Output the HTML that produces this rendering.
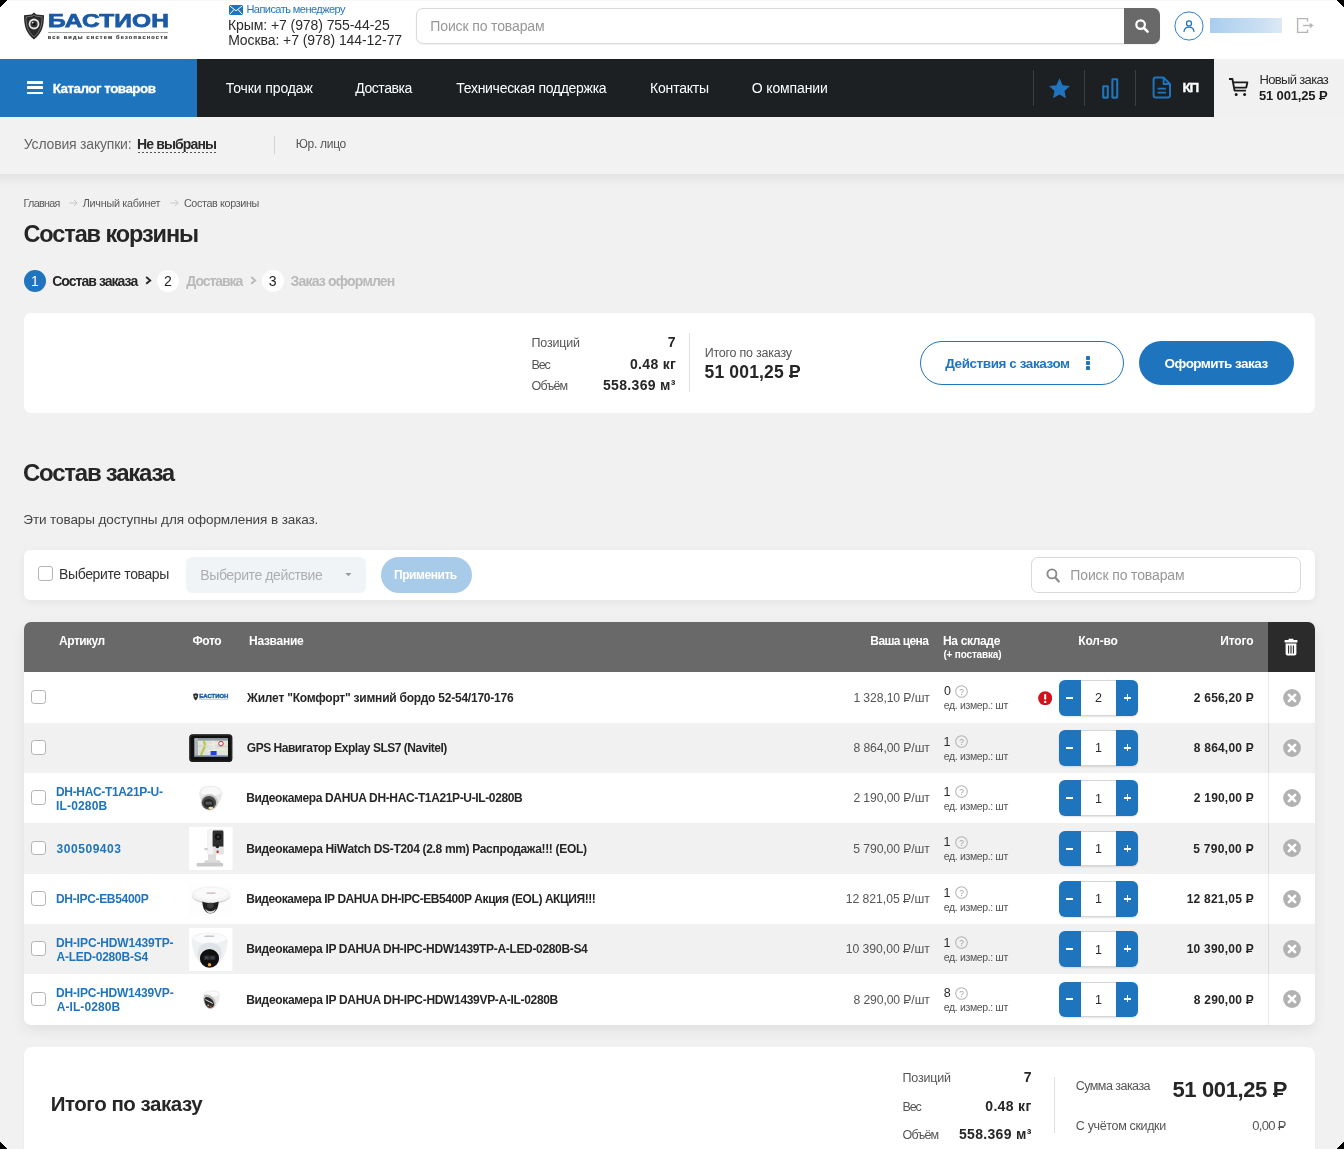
<!DOCTYPE html>
<html lang="ru"><head><meta charset="utf-8"><title>Состав корзины</title>
<style>
html,body{margin:0;padding:0;}
body{background:#000;width:1344px;height:1149px;overflow:hidden;font-family:"Liberation Sans",sans-serif;}
#win{position:absolute;left:0;top:0;width:1344px;height:1149px;background:#f1f1f1;overflow:hidden;will-change:transform;}
.b{position:absolute;display:block;}
.t{position:absolute;display:block;white-space:nowrap;line-height:1;}
.rub{position:relative;display:inline-block;}
.rub::after{content:"";position:absolute;left:0.02em;width:0.47em;top:0.655em;height:0.08em;background:currentColor;}
</style></head>
<body><div id="win">
<div class="b" style="left:0px;top:0px;width:1344px;height:59px;background:#fff;"></div>
<svg class="b" style="left:23.3px;top:11.6px" width="22" height="28" viewBox="0 0 22 28">
<path d="M11 0.6 L13.5 2.4 L21 3.2 C21 13 19.5 21 11 27.4 C2.5 21 1 13 1 3.2 L8.5 2.4 Z" fill="#2a2a2a"/>
<path d="M11 3 L13 4.2 L19 4.9 C19 12.5 17.6 19.6 11 24.8 C4.4 19.6 3 12.5 3 4.9 L9 4.2 Z" fill="none" stroke="#9a9a9a" stroke-width="0.6"/>
<circle cx="11" cy="12" r="5.4" fill="#e6e6e6"/><circle cx="11" cy="12" r="3.6" fill="#333"/><circle cx="11" cy="12" r="1.6" fill="#111"/><circle cx="9.7" cy="10.6" r="0.9" fill="#ddd"/>
</svg>
<span class="t" style="left:47.6px;top:11.4px;font-size:19px;font-weight:700;color:#1b5aa6;-webkit-text-stroke:0.75px #1b5aa6;transform-origin:0 0;transform:scaleX(1.288);letter-spacing:0.1px">БАСТИОН</span>
<div class="b" style="left:47.5px;top:31.6px;width:120.5px;height:1px;background:#a8a8a8;"></div>
<span id="t1" class="t " style="left:47.77px;top:35.06px;font-size:5.6px;font-weight:700;color:#3a3a3a;letter-spacing:1.207px;-webkit-text-stroke:0.2px #3a3a3a;">все виды систем безопасности</span>
<svg class="b" style="left:229px;top:5px" width="14" height="10" viewBox="0 0 14 10"><rect width="14" height="10" rx="1" fill="#1f74be"/><path d="M0.6 0.8 L7 5.8 L13.4 0.8 M0.6 9.4 L5 4.6 M13.4 9.4 L9 4.6" stroke="#fff" stroke-width="1" fill="none"/></svg>
<span id="t2" class="t " style="left:246.43px;top:4.29px;font-size:11px;font-weight:400;color:#1f74be;letter-spacing:-0.549px;">Написать менеджеру</span>
<span id="t3" class="t " style="left:228.00px;top:17.95px;font-size:14px;font-weight:400;color:#2b2b2b;letter-spacing:-0.078px;">Крым: +7 (978) 755-44-25</span>
<span id="t4" class="t " style="left:228.13px;top:33.05px;font-size:14px;font-weight:400;color:#2b2b2b;letter-spacing:-0.073px;">Москва: +7 (978) 144-12-77</span>
<div class="b" style="left:416px;top:8px;width:744px;height:36px;background:#fff;border:1px solid #d9d9d9;border-radius:7px;box-sizing:border-box;box-shadow:0 1px 2px rgba(0,0,0,0.06);"></div>
<span id="t5" class="t " style="left:430.32px;top:18.95px;font-size:14px;font-weight:400;color:#979797;letter-spacing:-0.131px;">Поиск по товарам</span>
<div class="b" style="left:1124px;top:8px;width:36px;height:36px;background:#696969;border-radius:0 7px 7px 0;"></div>
<svg class="b" style="left:1134px;top:18px" width="16" height="16" viewBox="0 0 16 16"><circle cx="6.6" cy="6.6" r="4.3" fill="none" stroke="#fff" stroke-width="2.2"/><path d="M9.8 9.8 L13.6 13.6" stroke="#fff" stroke-width="2.6" stroke-linecap="round"/></svg>
<svg class="b" style="left:1173.5px;top:10.5px" width="30" height="30" viewBox="0 0 30 30"><circle cx="15" cy="15" r="14.1" fill="#fff" stroke="#2e7fc6" stroke-width="1"/><circle cx="15" cy="12.4" r="2.5" fill="none" stroke="#1f74be" stroke-width="1.3"/><path d="M10 20.4 C10.4 17.2 12.4 16.2 15 16.2 C17.6 16.2 19.6 17.2 20 20.4" fill="none" stroke="#1f74be" stroke-width="1.3" stroke-linecap="round"/></svg>
<div class="b" style="left:1210px;top:18px;width:72px;height:15px;background:linear-gradient(90deg,#a9cdee 0%,#bcd8f1 40%,#c9dff3 70%,#dde9f5 100%);filter:blur(0.6px);"></div>
<svg class="b" style="left:1296.4px;top:17.2px" width="19" height="17" viewBox="0 0 19 17"><path d="M11.5 4.5 V1.6 H1.6 V15.4 H11.5 V12.5" fill="none" stroke="#b5b5b5" stroke-width="1.4"/><path d="M7 8.5 H15" stroke="#b5b5b5" stroke-width="1.4"/><path d="M13.8 5.8 L17.6 8.5 L13.8 11.2 Z" fill="#b5b5b5"/></svg>
<div class="b" style="left:0px;top:59px;width:197px;height:57.5px;background:#1f74be;"></div>
<div class="b" style="left:197px;top:59px;width:1017px;height:57.5px;background:#1c2023;"></div>
<div class="b" style="left:1214px;top:59px;width:130px;height:57.5px;background:#f1f1f1;"></div>
<div class="b" style="left:26.6px;top:80.85px;width:16.4px;height:2.7px;background:#fff;border-radius:0.6px;"></div>
<div class="b" style="left:26.6px;top:86.25px;width:16.4px;height:2.7px;background:#fff;border-radius:0.6px;"></div>
<div class="b" style="left:26.6px;top:91.65px;width:16.4px;height:2.7px;background:#fff;border-radius:0.6px;"></div>
<span id="t6" class="t " style="left:52.63px;top:82.06px;font-size:13.4px;font-weight:700;color:#fff;letter-spacing:-0.493px;-webkit-text-stroke:0.3px #fff;">Каталог товаров</span>
<span id="t7" class="t " style="left:225.77px;top:80.95px;font-size:14px;font-weight:400;color:#fff;letter-spacing:-0.098px;">Точки продаж</span>
<span id="t8" class="t " style="left:355.20px;top:80.95px;font-size:14px;font-weight:400;color:#fff;letter-spacing:-0.433px;">Доставка</span>
<span id="t9" class="t " style="left:456.27px;top:80.95px;font-size:14px;font-weight:400;color:#fff;letter-spacing:-0.288px;">Техническая поддержка</span>
<span id="t10" class="t " style="left:650.11px;top:80.95px;font-size:14px;font-weight:400;color:#fff;letter-spacing:-0.216px;">Контакты</span>
<span id="t11" class="t " style="left:751.84px;top:80.95px;font-size:14px;font-weight:400;color:#fff;letter-spacing:-0.147px;">О компании</span>
<div class="b" style="left:1033px;top:70px;width:1px;height:36px;background:#3b3f43;"></div>
<div class="b" style="left:1084px;top:70px;width:1px;height:36px;background:#3b3f43;"></div>
<div class="b" style="left:1135px;top:70px;width:1px;height:36px;background:#3b3f43;"></div>
<svg class="b" style="left:1047.6px;top:76.6px" width="23" height="23" viewBox="0 0 22 22"><path d="M11 1.2 L14 7.8 L21 8.6 L15.8 13.4 L17.2 20.4 L11 16.8 L4.8 20.4 L6.2 13.4 L1 8.6 L8 7.8 Z" fill="#1f74be"/></svg>
<svg class="b" style="left:1101px;top:76.6px" width="19" height="23" viewBox="0 0 19 23"><rect x="2.2" y="9.2" width="4.6" height="11.4" rx="0.4" fill="none" stroke="#1f74be" stroke-width="2.1"/><rect x="11.4" y="2.2" width="4.8" height="18.4" rx="0.4" fill="none" stroke="#1f74be" stroke-width="2.1"/></svg>
<svg class="b" style="left:1151.6px;top:76.4px" width="20" height="23" viewBox="0 0 20 23"><path d="M3.4 1.6 H11.6 L18 8 V19.6 Q18 21.4 16.2 21.4 H3.4 Q1.6 21.4 1.6 19.6 V3.4 Q1.6 1.6 3.4 1.6 Z" fill="none" stroke="#1f74be" stroke-width="2" stroke-linejoin="round"/><path d="M11.6 1.6 V8 H18" fill="none" stroke="#1f74be" stroke-width="1.8" stroke-linejoin="round"/><path d="M5.6 12.6 H14 M5.6 16.6 H14" stroke="#1f74be" stroke-width="1.8"/></svg>
<span id="t12" class="t " style="left:1182.54px;top:80.67px;font-size:13.5px;font-weight:700;color:#fff;letter-spacing:-1.337px;-webkit-text-stroke:0.35px #fff;">КП</span>
<svg class="b" style="left:1228px;top:77px" width="22" height="21" viewBox="0 0 22 21"><path d="M1 2 H4.4 L6.6 13.6 H18 M5.2 5.4 H19.4 L18.2 10.6 H6.2" fill="none" stroke="#1c1c1c" stroke-width="1.9" stroke-linejoin="round"/><circle cx="8.2" cy="17.6" r="1.5" fill="#1c1c1c"/><circle cx="16.6" cy="17.6" r="1.5" fill="#1c1c1c"/></svg>
<span id="t13" class="t " style="left:1259.60px;top:72.80px;font-size:13px;font-weight:400;color:#2b2b2b;letter-spacing:-0.673px;">Новый заказ</span>
<span id="t14" class="t " style="left:1259.00px;top:89.20px;font-size:13px;font-weight:700;color:#1c1c1c;letter-spacing:-0.158px;">51 001,25 <span class="rub">Р</span></span>
<div class="b" style="left:0px;top:116.5px;width:1344px;height:57.5px;background:#f2f2f2;"></div>
<div class="b" style="left:0px;top:174px;width:1344px;height:12px;background:linear-gradient(180deg,rgba(0,0,0,0.055),rgba(0,0,0,0));"></div>
<span id="t15" class="t " style="left:23.87px;top:137.35px;font-size:14px;font-weight:400;color:#666;letter-spacing:-0.197px;">Условия закупки:</span>
<span id="t16" class="t " style="left:137.00px;top:137.35px;font-size:14px;font-weight:700;color:#2b2b2b;letter-spacing:-0.867px;">Не выбраны</span>
<div class="b" style="left:138px;top:152.2px;width:78px;height:1px;background:repeating-linear-gradient(90deg,#555 0 2px,transparent 2px 4px);"></div>
<div class="b" style="left:274px;top:136px;width:1px;height:18px;background:#d4d4d4;"></div>
<span id="t17" class="t " style="left:295.80px;top:138.04px;font-size:12px;font-weight:400;color:#555;letter-spacing:-0.301px;">Юр. лицо</span>
<span id="t18" class="t " style="left:23.51px;top:197.56px;font-size:10.8px;font-weight:400;color:#5a5a5a;letter-spacing:-0.691px;">Главная</span>
<svg class="b" style="left:69px;top:198.6px" width="9" height="8" viewBox="0 0 9 8"><path d="M0.3 4 H8 M5 1 L8.2 4 L5 7" fill="none" stroke="#c4c4c4" stroke-width="0.9"/></svg>
<span id="t19" class="t " style="left:82.81px;top:197.56px;font-size:10.8px;font-weight:400;color:#5a5a5a;letter-spacing:-0.275px;">Личный кабинет</span>
<svg class="b" style="left:170.2px;top:198.6px" width="9" height="8" viewBox="0 0 9 8"><path d="M0.3 4 H8 M5 1 L8.2 4 L5 7" fill="none" stroke="#c4c4c4" stroke-width="0.9"/></svg>
<span id="t20" class="t " style="left:183.93px;top:197.56px;font-size:10.8px;font-weight:400;color:#5a5a5a;letter-spacing:-0.371px;">Состав корзины</span>
<span id="t21" class="t " style="left:23.44px;top:222.51px;font-size:23.5px;font-weight:700;color:#262626;letter-spacing:-1.098px;">Состав корзины</span>
<div class="b" style="left:24px;top:270px;width:22px;height:22px;background:#1f74be;border-radius:50%;"></div>
<span id="t22" class="t " style="left:35.00px;transform:translateX(-50%);top:273.75px;font-size:14px;font-weight:400;color:#fff;">1</span>
<span id="t23" class="t " style="left:52.20px;top:273.85px;font-size:14px;font-weight:700;color:#262626;letter-spacing:-0.958px;">Состав заказа</span>
<svg class="b" style="left:145px;top:276.4px" width="7" height="9" viewBox="0 0 7 9"><path d="M1.2 1 L5.2 4.4 L1.2 7.8" fill="none" stroke="#262626" stroke-width="1.9"/></svg>
<div class="b" style="left:157px;top:270px;width:22px;height:22px;background:#fff;border-radius:50%;"></div>
<span id="t24" class="t " style="left:168.00px;transform:translateX(-50%);top:273.75px;font-size:14px;font-weight:400;color:#222;">2</span>
<span id="t25" class="t " style="left:186.30px;top:273.85px;font-size:14px;font-weight:700;color:#b9b9b9;letter-spacing:-1.063px;">Доставка</span>
<svg class="b" style="left:250px;top:276.4px" width="7" height="9" viewBox="0 0 7 9"><path d="M1.2 1 L5.2 4.4 L1.2 7.8" fill="none" stroke="#b9b9b9" stroke-width="1.9"/></svg>
<div class="b" style="left:261.7px;top:270px;width:22px;height:22px;background:#fff;border-radius:50%;"></div>
<span id="t26" class="t " style="left:272.70px;transform:translateX(-50%);top:273.75px;font-size:14px;font-weight:400;color:#222;">3</span>
<span id="t27" class="t " style="left:290.60px;top:273.85px;font-size:14px;font-weight:700;color:#b9b9b9;letter-spacing:-0.810px;">Заказ оформлен</span>
<div class="b" style="left:23.8px;top:312.5px;width:1291.2px;height:100.6px;background:#fff;border-radius:7px;"></div>
<span id="t28" class="t " style="left:531.49px;top:337.42px;font-size:12.5px;font-weight:400;color:#555;letter-spacing:-0.174px;">Позиций</span>
<span id="t29" class="t " style="left:531.62px;top:358.62px;font-size:12.5px;font-weight:400;color:#555;letter-spacing:-1.218px;">Вес</span>
<span id="t30" class="t " style="left:531.62px;top:380.42px;font-size:12.5px;font-weight:400;color:#555;letter-spacing:-0.836px;">Объём</span>
<span id="t31" class="t " style="right:668.59px;top:334.95px;font-size:14px;font-weight:700;color:#262626;">7</span>
<span id="t32" class="t " style="right:667.80px;top:357.05px;font-size:14px;font-weight:700;color:#262626;letter-spacing:0.320px;">0.48 кг</span>
<span id="t33" class="t " style="right:668.20px;top:378.15px;font-size:14px;font-weight:700;color:#262626;letter-spacing:0.333px;">558.369 м³</span>
<div class="b" style="left:689px;top:333px;width:1px;height:59px;background:#e0e0e0;"></div>
<span id="t34" class="t " style="left:704.63px;top:347.22px;font-size:12.5px;font-weight:400;color:#555;letter-spacing:-0.224px;">Итого по заказу</span>
<span id="t35" class="t " style="left:704.51px;top:363.99px;font-size:17.5px;font-weight:700;color:#262626;letter-spacing:0.175px;">51 001,25 <span class="rub">Р</span></span>
<div class="b" style="left:920px;top:341px;width:204px;height:44px;background:#fff;border:1px solid #1f74be;border-radius:22px;box-sizing:border-box;"></div>
<span id="t36" class="t " style="left:945.20px;top:357.37px;font-size:13.5px;font-weight:700;color:#1f74be;letter-spacing:-0.426px;">Действия с заказом</span>
<div class="b" style="left:1085.8px;top:355.8px;width:4.2px;height:4px;background:#1f74be;border-radius:0.7px;"></div>
<div class="b" style="left:1085.8px;top:360.7px;width:4.2px;height:4px;background:#1f74be;border-radius:0.7px;"></div>
<div class="b" style="left:1085.8px;top:365.6px;width:4.2px;height:4px;background:#1f74be;border-radius:0.7px;"></div>
<div class="b" style="left:1139px;top:341px;width:155px;height:44px;background:#1f74be;border-radius:22px;"></div>
<span id="t37" class="t " style="left:1164.58px;top:357.37px;font-size:13.5px;font-weight:700;color:#fff;letter-spacing:-0.543px;">Оформить заказ</span>
<span id="t38" class="t " style="left:23.00px;top:460.68px;font-size:24px;font-weight:700;color:#262626;letter-spacing:-1.250px;">Состав заказа</span>
<span id="t39" class="t " style="left:23.31px;top:512.77px;font-size:13.5px;font-weight:400;color:#444;letter-spacing:-0.092px;">Эти товары доступны для оформления в заказ.</span>
<div class="b" style="left:23.9px;top:549.8px;width:1291.2px;height:50.3px;background:#fff;border-radius:6px;box-shadow:0 2px 9px rgba(0,0,0,0.06);"></div>
<div class="b" style="left:38.3px;top:566.2px;width:14.5px;height:14.5px;background:#fff;border:1px solid #b4b4b4;border-radius:3px;box-sizing:border-box;"></div>
<span id="t40" class="t " style="left:59.00px;top:567.05px;font-size:14px;font-weight:400;color:#333;letter-spacing:-0.371px;">Выберите товары</span>
<div class="b" style="left:186.2px;top:557px;width:179.6px;height:36px;background:#f1f4f7;border-radius:6px;"></div>
<span id="t41" class="t " style="left:200.30px;top:568.15px;font-size:14px;font-weight:400;color:#aeaeae;letter-spacing:-0.397px;">Выберите действие</span>
<svg class="b" style="left:344.6px;top:573.4px" width="7" height="4" viewBox="0 0 7 4"><path d="M0.3 0 H6.5 L3.4 3.3 Z" fill="#999"/></svg>
<div class="b" style="left:380.8px;top:557px;width:91.3px;height:36px;background:#a9cbea;border-radius:18px;"></div>
<span id="t42" class="t " style="left:394.00px;top:569.24px;font-size:12px;font-weight:700;color:#fff;letter-spacing:-0.441px;">Применить</span>
<div class="b" style="left:1031px;top:557px;width:270px;height:36px;background:#fff;border:1px solid #d9d9d9;border-radius:7px;box-sizing:border-box;"></div>
<svg class="b" style="left:1046.4px;top:567.6px" width="15" height="15" viewBox="0 0 15 15"><circle cx="5.9" cy="5.9" r="4.5" fill="none" stroke="#8a8a8a" stroke-width="1.9"/><path d="M9.3 9.5 L12.8 13.4" stroke="#8a8a8a" stroke-width="2.2" stroke-linecap="round"/></svg>
<span id="t43" class="t " style="left:1070.32px;top:567.95px;font-size:14px;font-weight:400;color:#979797;letter-spacing:-0.131px;">Поиск по товарам</span>
<div class="b" style="left:24px;top:622px;width:1291px;height:402.6px;background:#fff;border-radius:7px;box-shadow:0 5px 14px rgba(0,0,0,0.075);"></div>
<div class="b" style="left:24px;top:622px;width:1244px;height:50px;background:#696969;border-radius:7px 0 0 0;"></div>
<div class="b" style="left:1268px;top:622px;width:47px;height:50px;background:#2b2b2b;border-radius:0 7px 0 0;"></div>
<span id="t44" class="t " style="left:59.12px;top:635.04px;font-size:12px;font-weight:700;color:#fff;letter-spacing:-0.524px;">Артикул</span>
<span id="t45" class="t " style="left:192.49px;top:635.04px;font-size:12px;font-weight:700;color:#fff;letter-spacing:-0.423px;">Фото</span>
<span id="t46" class="t " style="left:249.00px;top:635.04px;font-size:12px;font-weight:700;color:#fff;letter-spacing:-0.286px;">Название</span>
<span id="t47" class="t " style="right:415.79px;top:635.04px;font-size:12px;font-weight:700;color:#fff;letter-spacing:-0.604px;">Ваша цена</span>
<span id="t48" class="t " style="left:943.00px;top:635.04px;font-size:12px;font-weight:700;color:#fff;letter-spacing:-0.346px;">На складе</span>
<span id="t49" class="t " style="left:943.42px;top:649.83px;font-size:10px;font-weight:700;color:#fff;letter-spacing:-0.176px;">(+ поставка)</span>
<span id="t50" class="t " style="left:1098.00px;transform:translateX(-50%);top:635.04px;font-size:12px;font-weight:700;color:#fff;letter-spacing:-0.198px;">Кол-во</span>
<span id="t51" class="t " style="right:90.69px;top:635.04px;font-size:12px;font-weight:700;color:#fff;letter-spacing:-0.162px;">Итого</span>
<svg class="b" style="left:1284px;top:638px" width="14" height="18" viewBox="0 0 14 18"><path d="M4.6 2 V0.8 H9.4 V2 H13.4 V4.4 H0.6 V2 Z" fill="#fff"/><path d="M1.6 5.6 H12.4 V15.6 C12.4 16.8 11.6 17.6 10.4 17.6 H3.6 C2.4 17.6 1.6 16.8 1.6 15.6 Z" fill="#fff"/><path d="M4.6 7.6 V15.4 M7 7.6 V15.4 M9.4 7.6 V15.4" stroke="#2b2b2b" stroke-width="1.1"/></svg>
<div class="b" style="left:31px;top:689.75px;width:14.5px;height:14.6px;background:#fff;border:1px solid #b4b4b4;border-radius:3.2px;box-sizing:border-box;"></div>
<svg class="b" style="left:193px;top:693.15px" width="36" height="8" viewBox="0 0 36 8"><path d="M2.7 0.2 L5.2 1 C5.2 4 4.6 6 2.7 7.4 C0.8 6 0.2 4 0.2 1 Z" fill="#2b2b2b"/><circle cx="2.7" cy="3.2" r="1" fill="#bbb"/><text x="6.2" y="5.3" font-family="Liberation Sans" font-weight="700" font-size="5.6" textLength="29.2" lengthAdjust="spacingAndGlyphs" fill="#1b5aa6" stroke="#1b5aa6" stroke-width="0.35">БАСТИОН</text><rect x="6.2" y="6.3" width="29.2" height="0.5" fill="#aaa"/></svg>
<span id="t52" class="t " style="left:247.10px;top:691.99px;font-size:12px;font-weight:700;color:#262626;letter-spacing:-0.224px;">Жилет "Комфорт" зимний бордо 52-54/170-176</span>
<span id="t53" class="t " style="right:414.21px;top:691.62px;font-size:12.2px;font-weight:400;color:#555;letter-spacing:-0.101px;">1 328,10 <span class="rub">Р</span>/шт</span>
<span id="t54" class="t " style="left:944.00px;top:684.77px;font-size:12.5px;font-weight:400;color:#2b2b2b;">0</span>
<svg class="b" style="left:955.4px;top:684.75px" width="13" height="13" viewBox="0 0 13 13"><circle cx="6.5" cy="6.5" r="5.8" fill="none" stroke="#b4b4b4" stroke-width="1.05"/><text x="6.5" y="9.5" font-size="8.4" font-family="Liberation Sans" text-anchor="middle" fill="#a0a0a0">?</text></svg>
<span id="t55" class="t " style="left:943.83px;top:700.46px;font-size:10.5px;font-weight:400;color:#555;letter-spacing:-0.367px;">ед. измер.: шт</span>
<svg class="b" style="left:1037.7px;top:690.55px" width="14.4" height="14.4" viewBox="0 0 14 14"><circle cx="7" cy="7" r="6.8" fill="#d0121a"/><rect x="6" y="2.8" width="2" height="5.6" rx="0.8" fill="#fff"/><circle cx="7" cy="10.6" r="1.15" fill="#fff"/></svg>
<div class="b" style="left:1059.2px;top:679.75px;width:78.9px;height:35.8px;background:#1f74be;border-radius:6px;box-shadow:0 1px 2px rgba(0,0,0,0.12);"></div>
<div class="b" style="left:1080.7px;top:679.75px;width:35.7px;height:35.8px;background:#fff;border-top:1px solid #d6d6d6;border-bottom:1px solid #d6d6d6;box-sizing:border-box;"></div>
<div class="b" style="left:1066.2px;top:697px;width:7.2px;height:1.6px;background:#fff;"></div>
<div class="b" style="left:1123.7px;top:697px;width:7.2px;height:1.6px;background:#fff;"></div>
<div class="b" style="left:1126.5px;top:694.2px;width:1.6px;height:7.2px;background:#fff;"></div>
<span id="t56" class="t " style="left:1098.60px;transform:translateX(-50%);top:691.67px;font-size:12.5px;font-weight:400;color:#2b2b2b;">2</span>
<span id="t57" class="t " style="right:90.13px;top:691.69px;font-size:12px;font-weight:700;color:#262626;letter-spacing:0.196px;">2 656,20 <span class="rub">Р</span></span>
<svg class="b" style="left:1283px;top:688.55px" width="18" height="18" viewBox="0 0 18 18"><circle cx="9" cy="9" r="8.9" fill="#b2b2b2"/><path d="M5.9 5.9 L12.1 12.1 M12.1 5.9 L5.9 12.1" stroke="#fff" stroke-width="2.7" stroke-linecap="round"/></svg>
<div class="b" style="left:24px;top:722.9px;width:1291.2px;height:49.8px;background:#f1f1f1;"></div>
<div class="b" style="left:31px;top:740px;width:14.5px;height:14.6px;background:#fff;border:1px solid #b4b4b4;border-radius:3.2px;box-sizing:border-box;"></div>
<svg class="b" style="left:189.2px;top:733.9px" width="43.6" height="28.4" viewBox="0 0 43.6 28.4"><rect x="0.2" y="0.3" width="43.2" height="27.8" rx="3.6" fill="#111"/><rect x="1.2" y="1.2" width="41.2" height="26" rx="3" fill="none" stroke="#3a3a3a" stroke-width="0.6"/><rect x="5.6" y="4.4" width="33.4" height="18.6" fill="#dfe3da"/><rect x="5.6" y="4.4" width="33.4" height="2.2" fill="#8d9cab"/><rect x="5.6" y="4.4" width="3.4" height="18.6" fill="#aeb6bd"/><path d="M12 23 C12 17 16 15 16 11 C16 8.6 14.6 7.4 14.6 6.6" stroke="#b8c94a" stroke-width="2.2" fill="none"/><path d="M16 12 L30 9 M18 17 L36 15 M24 6.6 L26 23" stroke="#f3efe4" stroke-width="1.2" fill="none"/><path d="M9 12 H20 M28 12.5 H39" stroke="#c9cdbf" stroke-width="0.8"/><circle cx="32" cy="9.6" r="2.3" fill="#f4f4f4" stroke="#c9302c" stroke-width="1"/><rect x="21.6" y="17" width="6" height="4.2" fill="#2440e0"/><rect x="5.6" y="21.4" width="33.4" height="1.6" fill="#6f7f8f"/></svg>
<span id="t58" class="t " style="left:246.82px;top:742.24px;font-size:12px;font-weight:700;color:#262626;letter-spacing:-0.480px;">GPS Навигатор Explay SLS7 (Navitel)</span>
<span id="t59" class="t " style="right:414.21px;top:741.87px;font-size:12.2px;font-weight:400;color:#555;letter-spacing:-0.104px;">8 864,00 <span class="rub">Р</span>/шт</span>
<span id="t60" class="t " style="left:943.48px;top:735.62px;font-size:12.5px;font-weight:400;color:#2b2b2b;">1</span>
<svg class="b" style="left:955.4px;top:735px" width="13" height="13" viewBox="0 0 13 13"><circle cx="6.5" cy="6.5" r="5.8" fill="none" stroke="#b4b4b4" stroke-width="1.05"/><text x="6.5" y="9.5" font-size="8.4" font-family="Liberation Sans" text-anchor="middle" fill="#a0a0a0">?</text></svg>
<span id="t61" class="t " style="left:943.83px;top:750.71px;font-size:10.5px;font-weight:400;color:#555;letter-spacing:-0.367px;">ед. измер.: шт</span>
<div class="b" style="left:1059.2px;top:730px;width:78.9px;height:35.8px;background:#1f74be;border-radius:6px;box-shadow:0 1px 2px rgba(0,0,0,0.12);"></div>
<div class="b" style="left:1080.7px;top:730px;width:35.7px;height:35.8px;background:#fff;border-top:1px solid #d6d6d6;border-bottom:1px solid #d6d6d6;box-sizing:border-box;"></div>
<div class="b" style="left:1066.2px;top:747px;width:7.2px;height:1.6px;background:#fff;"></div>
<div class="b" style="left:1123.7px;top:747px;width:7.2px;height:1.6px;background:#fff;"></div>
<div class="b" style="left:1126.5px;top:744.2px;width:1.6px;height:7.2px;background:#fff;"></div>
<span id="t62" class="t " style="left:1098.60px;transform:translateX(-50%);top:741.92px;font-size:12.5px;font-weight:400;color:#2b2b2b;">1</span>
<span id="t63" class="t " style="right:90.13px;top:741.94px;font-size:12px;font-weight:700;color:#262626;letter-spacing:0.196px;">8 864,00 <span class="rub">Р</span></span>
<svg class="b" style="left:1283px;top:738.8px" width="18" height="18" viewBox="0 0 18 18"><circle cx="9" cy="9" r="8.9" fill="#b2b2b2"/><path d="M5.9 5.9 L12.1 12.1 M12.1 5.9 L5.9 12.1" stroke="#fff" stroke-width="2.7" stroke-linecap="round"/></svg>
<div class="b" style="left:31px;top:790.05px;width:14.5px;height:14.6px;background:#fff;border:1px solid #b4b4b4;border-radius:3.2px;box-sizing:border-box;"></div>
<span id="t64" class="t " style="left:56.00px;top:785.94px;font-size:12px;font-weight:700;color:#1f74be;letter-spacing:-0.340px;">DH-HAC-T1A21P-U-</span>
<span id="t65" class="t " style="left:56.00px;top:799.59px;font-size:12px;font-weight:700;color:#1f74be;letter-spacing:0.169px;">IL-0280B</span>
<svg class="b" style="left:198px;top:784.95px" width="25" height="26.4" viewBox="0 0 25 26.4"><path d="M1.2 8.6 C1.2 3.4 6 0.8 12.6 0.8 C19.2 0.8 24 3.6 24 8.4 C24 12.6 22.4 17 19 20 L5.4 18.4 C2.6 15.6 1.2 12.4 1.2 8.6 Z" fill="#e9e9e9"/><path d="M2.4 7.6 C3.4 3.6 7.4 1.8 12.6 1.8 C17.8 1.8 22 3.8 23 7.4 C20 10 16 11 12.6 11 C8.6 11 5 10 2.4 7.6 Z" fill="#f8f8f8"/><ellipse cx="11.4" cy="17.2" rx="8.6" ry="8.2" fill="#c8c8c8"/><ellipse cx="11" cy="17.8" rx="7.2" ry="6.8" fill="#4a4a4a"/><ellipse cx="10.8" cy="18.4" rx="5" ry="4.4" fill="#262626"/><rect x="7.6" y="16.8" width="6.4" height="2.6" rx="0.6" fill="#55595e"/><ellipse cx="12.8" cy="23" rx="2.4" ry="1.3" fill="#efe2a8"/></svg>
<span id="t66" class="t " style="left:246.20px;top:792.29px;font-size:12px;font-weight:700;color:#262626;letter-spacing:-0.363px;">Видеокамера DAHUA DH-HAC-T1A21P-U-IL-0280B</span>
<span id="t67" class="t " style="right:414.21px;top:791.92px;font-size:12.2px;font-weight:400;color:#555;letter-spacing:-0.101px;">2 190,00 <span class="rub">Р</span>/шт</span>
<span id="t68" class="t " style="left:943.48px;top:785.72px;font-size:12.5px;font-weight:400;color:#2b2b2b;">1</span>
<svg class="b" style="left:955.4px;top:785.05px" width="13" height="13" viewBox="0 0 13 13"><circle cx="6.5" cy="6.5" r="5.8" fill="none" stroke="#b4b4b4" stroke-width="1.05"/><text x="6.5" y="9.5" font-size="8.4" font-family="Liberation Sans" text-anchor="middle" fill="#a0a0a0">?</text></svg>
<span id="t69" class="t " style="left:943.83px;top:800.76px;font-size:10.5px;font-weight:400;color:#555;letter-spacing:-0.367px;">ед. измер.: шт</span>
<div class="b" style="left:1059.2px;top:780.05px;width:78.9px;height:35.8px;background:#1f74be;border-radius:6px;box-shadow:0 1px 2px rgba(0,0,0,0.12);"></div>
<div class="b" style="left:1080.7px;top:780.05px;width:35.7px;height:35.8px;background:#fff;border-top:1px solid #d6d6d6;border-bottom:1px solid #d6d6d6;box-sizing:border-box;"></div>
<div class="b" style="left:1066.2px;top:797px;width:7.2px;height:1.6px;background:#fff;"></div>
<div class="b" style="left:1123.7px;top:797px;width:7.2px;height:1.6px;background:#fff;"></div>
<div class="b" style="left:1126.5px;top:794.2px;width:1.6px;height:7.2px;background:#fff;"></div>
<span id="t70" class="t " style="left:1098.60px;transform:translateX(-50%);top:792.52px;font-size:12.5px;font-weight:400;color:#2b2b2b;">1</span>
<span id="t71" class="t " style="right:90.13px;top:791.99px;font-size:12px;font-weight:700;color:#262626;letter-spacing:0.196px;">2 190,00 <span class="rub">Р</span></span>
<svg class="b" style="left:1283px;top:788.85px" width="18" height="18" viewBox="0 0 18 18"><circle cx="9" cy="9" r="8.9" fill="#b2b2b2"/><path d="M5.9 5.9 L12.1 12.1 M12.1 5.9 L5.9 12.1" stroke="#fff" stroke-width="2.7" stroke-linecap="round"/></svg>
<div class="b" style="left:24px;top:823px;width:1291.2px;height:50.8px;background:#f1f1f1;"></div>
<div class="b" style="left:31px;top:840.6px;width:14.5px;height:14.6px;background:#fff;border:1px solid #b4b4b4;border-radius:3.2px;box-sizing:border-box;"></div>
<span id="t72" class="t " style="left:56.57px;top:842.74px;font-size:12px;font-weight:700;color:#1f74be;letter-spacing:0.543px;">300509403</span>
<svg class="b" style="left:189px;top:826.9px" width="43.6" height="43.6" viewBox="0 0 43.6 43.6"><rect width="43.6" height="43.6" fill="#fff"/><path d="M14.2 36.4 L16.4 33.2 H30 L33 36.4 Z" fill="#d6d6d6"/><rect x="7.6" y="36" width="26.6" height="3.4" rx="1" fill="#c9c9c9"/><rect x="19" y="26" width="8" height="9" fill="#dcdcdc"/><path d="M18.4 4.2 Q18.4 2.4 20.4 2.4 H32.6 Q34.8 2.4 34.8 4.6 V25.4 Q34.8 27.6 32.6 27.6 H20.4 Q18.4 27.6 18.4 25.6 Z" fill="#e4e4e4"/><path d="M18.4 4.2 Q18.4 2.4 20.4 2.4 H24 V27.6 H20.4 Q18.4 27.6 18.4 25.6 Z" fill="#f4f4f4"/><path d="M23.6 5 Q23.6 3.6 25 3.6 H33 Q34.4 3.6 34.4 5 V19.4 H23.6 Z" fill="#2e2e2e"/><circle cx="29.2" cy="9.8" r="3.3" fill="#111"/><circle cx="29.2" cy="9.8" r="1.5" fill="#3b3b3b"/><circle cx="28.4" cy="19.4" r="1.8" fill="#222"/><rect x="27.6" y="23.6" width="2" height="2.4" fill="#c0392b"/><rect x="15.4" y="21" width="3.4" height="2.2" fill="#cfcfcf"/></svg>
<span id="t73" class="t " style="left:246.20px;top:842.84px;font-size:12px;font-weight:700;color:#262626;letter-spacing:-0.327px;">Видеокамера HiWatch DS-T204 (2.8 mm) Распродажа!!! (EOL)</span>
<span id="t74" class="t " style="right:414.21px;top:843.27px;font-size:12.2px;font-weight:400;color:#555;letter-spacing:-0.094px;">5 790,00 <span class="rub">Р</span>/шт</span>
<span id="t75" class="t " style="left:943.48px;top:835.62px;font-size:12.5px;font-weight:400;color:#2b2b2b;">1</span>
<svg class="b" style="left:955.4px;top:835.6px" width="13" height="13" viewBox="0 0 13 13"><circle cx="6.5" cy="6.5" r="5.8" fill="none" stroke="#b4b4b4" stroke-width="1.05"/><text x="6.5" y="9.5" font-size="8.4" font-family="Liberation Sans" text-anchor="middle" fill="#a0a0a0">?</text></svg>
<span id="t76" class="t " style="left:943.83px;top:851.31px;font-size:10.5px;font-weight:400;color:#555;letter-spacing:-0.367px;">ед. измер.: шт</span>
<div class="b" style="left:1059.2px;top:830.6px;width:78.9px;height:35.8px;background:#1f74be;border-radius:6px;box-shadow:0 1px 2px rgba(0,0,0,0.12);"></div>
<div class="b" style="left:1080.7px;top:830.6px;width:35.7px;height:35.8px;background:#fff;border-top:1px solid #d6d6d6;border-bottom:1px solid #d6d6d6;box-sizing:border-box;"></div>
<div class="b" style="left:1066.2px;top:848px;width:7.2px;height:1.6px;background:#fff;"></div>
<div class="b" style="left:1123.7px;top:848px;width:7.2px;height:1.6px;background:#fff;"></div>
<div class="b" style="left:1126.5px;top:845.2px;width:1.6px;height:7.2px;background:#fff;"></div>
<span id="t77" class="t " style="left:1098.60px;transform:translateX(-50%);top:842.52px;font-size:12.5px;font-weight:400;color:#2b2b2b;">1</span>
<span id="t78" class="t " style="right:90.08px;top:842.54px;font-size:12px;font-weight:700;color:#262626;letter-spacing:0.258px;">5 790,00 <span class="rub">Р</span></span>
<svg class="b" style="left:1283px;top:839.4px" width="18" height="18" viewBox="0 0 18 18"><circle cx="9" cy="9" r="8.9" fill="#b2b2b2"/><path d="M5.9 5.9 L12.1 12.1 M12.1 5.9 L5.9 12.1" stroke="#fff" stroke-width="2.7" stroke-linecap="round"/></svg>
<div class="b" style="left:31px;top:890.975px;width:14.5px;height:14.6px;background:#fff;border:1px solid #b4b4b4;border-radius:3.2px;box-sizing:border-box;"></div>
<span id="t79" class="t " style="left:56.00px;top:893.12px;font-size:12px;font-weight:700;color:#1f74be;letter-spacing:-0.308px;">DH-IPC-EB5400P</span>
<svg class="b" style="left:189px;top:883.675px" width="44" height="32" viewBox="0 0 44 32"><rect x="0.5" y="1" width="43" height="30.5" fill="#fdfdfd"/><ellipse cx="22" cy="11.6" rx="19.2" ry="8.8" fill="#dcdcdc"/><ellipse cx="22" cy="10.2" rx="19.2" ry="7.8" fill="#f4f4f4"/><ellipse cx="22" cy="9.4" rx="16" ry="5.6" fill="#fafafa"/><rect x="17.6" y="8.4" width="9" height="1.3" rx="0.5" fill="#c9b1b1"/><path d="M13.4 17.4 C13.4 25 17 29.4 21.4 29.4 C25.8 29.4 29.6 25 29.6 17.4 C27 18.6 24.6 19 21.4 19 C18.4 19 16 18.6 13.4 17.4 Z" fill="#1e1e1e"/><path d="M16 24.6 C18 28 25 28 27 24.6 C25.6 28.6 23.6 29.4 21.4 29.4 C19.2 29.4 17.4 28.4 16 24.6 Z" fill="#d9d9d9"/><ellipse cx="21.4" cy="21.6" rx="3.4" ry="2.8" fill="#3c3c3c"/></svg>
<span id="t80" class="t " style="left:246.20px;top:893.22px;font-size:12px;font-weight:700;color:#262626;letter-spacing:-0.433px;">Видеокамера IP DAHUA DH-IPC-EB5400P Акция (EOL) АКЦИЯ!!!</span>
<span id="t81" class="t " style="right:414.25px;top:892.85px;font-size:12.2px;font-weight:400;color:#555;letter-spacing:-0.035px;">12 821,05 <span class="rub">Р</span>/шт</span>
<span id="t82" class="t " style="left:943.48px;top:886.57px;font-size:12.5px;font-weight:400;color:#2b2b2b;">1</span>
<svg class="b" style="left:955.4px;top:885.975px" width="13" height="13" viewBox="0 0 13 13"><circle cx="6.5" cy="6.5" r="5.8" fill="none" stroke="#b4b4b4" stroke-width="1.05"/><text x="6.5" y="9.5" font-size="8.4" font-family="Liberation Sans" text-anchor="middle" fill="#a0a0a0">?</text></svg>
<span id="t83" class="t " style="left:943.83px;top:901.69px;font-size:10.5px;font-weight:400;color:#555;letter-spacing:-0.367px;">ед. измер.: шт</span>
<div class="b" style="left:1059.2px;top:880.975px;width:78.9px;height:35.8px;background:#1f74be;border-radius:6px;box-shadow:0 1px 2px rgba(0,0,0,0.12);"></div>
<div class="b" style="left:1080.7px;top:880.975px;width:35.7px;height:35.8px;background:#fff;border-top:1px solid #d6d6d6;border-bottom:1px solid #d6d6d6;box-sizing:border-box;"></div>
<div class="b" style="left:1066.2px;top:898px;width:7.2px;height:1.6px;background:#fff;"></div>
<div class="b" style="left:1123.7px;top:898px;width:7.2px;height:1.6px;background:#fff;"></div>
<div class="b" style="left:1126.5px;top:895.2px;width:1.6px;height:7.2px;background:#fff;"></div>
<span id="t84" class="t " style="left:1098.60px;transform:translateX(-50%);top:892.89px;font-size:12.5px;font-weight:400;color:#2b2b2b;">1</span>
<span id="t85" class="t " style="right:90.08px;top:892.92px;font-size:12px;font-weight:700;color:#262626;letter-spacing:0.229px;">12 821,05 <span class="rub">Р</span></span>
<svg class="b" style="left:1283px;top:889.775px" width="18" height="18" viewBox="0 0 18 18"><circle cx="9" cy="9" r="8.9" fill="#b2b2b2"/><path d="M5.9 5.9 L12.1 12.1 M12.1 5.9 L5.9 12.1" stroke="#fff" stroke-width="2.7" stroke-linecap="round"/></svg>
<div class="b" style="left:24px;top:923.75px;width:1291.2px;height:50.25px;background:#f1f1f1;"></div>
<div class="b" style="left:31px;top:941.075px;width:14.5px;height:14.6px;background:#fff;border:1px solid #b4b4b4;border-radius:3.2px;box-sizing:border-box;"></div>
<span id="t86" class="t " style="left:56.00px;top:936.99px;font-size:12px;font-weight:700;color:#1f74be;letter-spacing:-0.154px;">DH-IPC-HDW1439TP-</span>
<span id="t87" class="t " style="left:56.50px;top:950.62px;font-size:12px;font-weight:700;color:#1f74be;letter-spacing:-0.239px;">A-LED-0280B-S4</span>
<svg class="b" style="left:189.2px;top:927.875px" width="43.4" height="43.5" viewBox="0 0 43.4 43.5"><rect width="43.4" height="43.5" fill="#fff"/><path d="M2.8 12.6 C2.8 7 10 4.4 20.6 4.4 C31.2 4.4 38.6 7.2 38.6 12.6 C38.6 20 36 28.4 31.4 33.6 L9.6 33.6 C5.2 28 2.8 20 2.8 12.6 Z" fill="#eef0f2"/><path d="M4 10.8 C6 6.8 12.4 5.4 20.6 5.4 C28.8 5.4 35.6 7 37.4 10.8 C33 14.6 27 16 20.6 16 C14.2 16 8 14.6 4 10.8 Z" fill="#fafbfc"/><path d="M8.6 26 C8.6 18.4 14 14.6 20.6 14.6 C27.2 14.6 32.6 18.4 32.6 25 C32.6 32 27.4 39 20.6 39 C13.8 39 8.6 33 8.6 26 Z" fill="#dfe3e7"/><rect x="15.4" y="7.6" width="10" height="1.5" rx="0.6" fill="#c4c7ca"/><ellipse cx="20.5" cy="30.2" rx="10.2" ry="9.8" fill="#f7f7f7"/><ellipse cx="20.5" cy="30.4" rx="9.6" ry="9.3" fill="#101010"/><rect x="14.6" y="27.4" width="12" height="4.6" rx="1" fill="#23272c"/><rect x="16" y="28.2" width="3.6" height="3" fill="#3a4048"/><rect x="21.6" y="28.2" width="3.6" height="3" fill="#3a4048"/><circle cx="20.5" cy="36.8" r="1.7" fill="#f0a23a"/></svg>
<span id="t88" class="t " style="left:246.20px;top:943.32px;font-size:12px;font-weight:700;color:#262626;letter-spacing:-0.334px;">Видеокамера IP DAHUA DH-IPC-HDW1439TP-A-LED-0280B-S4</span>
<span id="t89" class="t " style="right:414.25px;top:942.95px;font-size:12.2px;font-weight:400;color:#555;letter-spacing:-0.035px;">10 390,00 <span class="rub">Р</span>/шт</span>
<span id="t90" class="t " style="left:943.48px;top:936.77px;font-size:12.5px;font-weight:400;color:#2b2b2b;">1</span>
<svg class="b" style="left:955.4px;top:936.075px" width="13" height="13" viewBox="0 0 13 13"><circle cx="6.5" cy="6.5" r="5.8" fill="none" stroke="#b4b4b4" stroke-width="1.05"/><text x="6.5" y="9.5" font-size="8.4" font-family="Liberation Sans" text-anchor="middle" fill="#a0a0a0">?</text></svg>
<span id="t91" class="t " style="left:943.83px;top:951.79px;font-size:10.5px;font-weight:400;color:#555;letter-spacing:-0.367px;">ед. измер.: шт</span>
<div class="b" style="left:1059.2px;top:931.075px;width:78.9px;height:35.8px;background:#1f74be;border-radius:6px;box-shadow:0 1px 2px rgba(0,0,0,0.12);"></div>
<div class="b" style="left:1080.7px;top:931.075px;width:35.7px;height:35.8px;background:#fff;border-top:1px solid #d6d6d6;border-bottom:1px solid #d6d6d6;box-sizing:border-box;"></div>
<div class="b" style="left:1066.2px;top:948px;width:7.2px;height:1.6px;background:#fff;"></div>
<div class="b" style="left:1123.7px;top:948px;width:7.2px;height:1.6px;background:#fff;"></div>
<div class="b" style="left:1126.5px;top:945.2px;width:1.6px;height:7.2px;background:#fff;"></div>
<span id="t92" class="t " style="left:1098.60px;transform:translateX(-50%);top:943.57px;font-size:12.5px;font-weight:400;color:#2b2b2b;">1</span>
<span id="t93" class="t " style="right:90.08px;top:943.02px;font-size:12px;font-weight:700;color:#262626;letter-spacing:0.229px;">10 390,00 <span class="rub">Р</span></span>
<svg class="b" style="left:1283px;top:939.875px" width="18" height="18" viewBox="0 0 18 18"><circle cx="9" cy="9" r="8.9" fill="#b2b2b2"/><path d="M5.9 5.9 L12.1 12.1 M12.1 5.9 L5.9 12.1" stroke="#fff" stroke-width="2.7" stroke-linecap="round"/></svg>
<div class="b" style="left:31px;top:991.5px;width:14.5px;height:14.6px;background:#fff;border:1px solid #b4b4b4;border-radius:3.2px;box-sizing:border-box;"></div>
<span id="t94" class="t " style="left:56.00px;top:986.84px;font-size:12px;font-weight:700;color:#1f74be;letter-spacing:-0.188px;">DH-IPC-HDW1439VP-</span>
<span id="t95" class="t " style="left:56.67px;top:1001.04px;font-size:12px;font-weight:700;color:#1f74be;letter-spacing:0.081px;">A-IL-0280B</span>
<svg class="b" style="left:202px;top:989.8px" width="18.4" height="20" viewBox="0 0 18.4 20"><path d="M1.6 4.4 C3 1.4 7 0.6 11 0.6 C15 0.6 17.8 2 17.8 4.6 C17.8 9 16.6 13.4 13.6 16.6 L4 12 Z" fill="#ececec"/><path d="M2.4 4 C4 1.8 7.4 1.4 11 1.4 C14.4 1.4 16.8 2.4 17 4.4 C14 6.4 11 6.8 8 6.4 C5.6 6 3.6 5.2 2.4 4 Z" fill="#fbfbfb"/><path d="M1.4 8 C1.4 5.4 3 4.4 5 4.6 C9 5 13 8.6 13.6 12.6 C14 16 11.8 19 8.4 19 C4.4 19 1.4 13.6 1.4 8 Z" fill="#bdbdbd"/><path d="M2.4 9.6 C2.4 7.6 3.6 6.8 5 7 C8.4 7.6 11.6 10.4 12 13.6 C12.4 16.2 10.6 18 8.2 18 C5 18 2.4 13.8 2.4 9.6 Z" fill="#2a2a2a"/><path d="M3.4 9.6 L10.8 13.4" stroke="#e6e6e6" stroke-width="1" fill="none"/><circle cx="8.6" cy="16.6" r="1" fill="#e03a2a"/><circle cx="6.2" cy="15.4" r="0.8" fill="#f0c040"/></svg>
<span id="t96" class="t " style="left:246.20px;top:993.74px;font-size:12px;font-weight:700;color:#262626;letter-spacing:-0.323px;">Видеокамера IP DAHUA DH-IPC-HDW1439VP-A-IL-0280B</span>
<span id="t97" class="t " style="right:414.21px;top:994.07px;font-size:12.2px;font-weight:400;color:#555;letter-spacing:-0.104px;">8 290,00 <span class="rub">Р</span>/шт</span>
<span id="t98" class="t " style="left:943.72px;top:986.52px;font-size:12.5px;font-weight:400;color:#2b2b2b;">8</span>
<svg class="b" style="left:955.4px;top:986.5px" width="13" height="13" viewBox="0 0 13 13"><circle cx="6.5" cy="6.5" r="5.8" fill="none" stroke="#b4b4b4" stroke-width="1.05"/><text x="6.5" y="9.5" font-size="8.4" font-family="Liberation Sans" text-anchor="middle" fill="#a0a0a0">?</text></svg>
<span id="t99" class="t " style="left:943.83px;top:1002.21px;font-size:10.5px;font-weight:400;color:#555;letter-spacing:-0.367px;">ед. измер.: шт</span>
<div class="b" style="left:1059.2px;top:981.5px;width:78.9px;height:35.8px;background:#1f74be;border-radius:6px;box-shadow:0 1px 2px rgba(0,0,0,0.12);"></div>
<div class="b" style="left:1080.7px;top:981.5px;width:35.7px;height:35.8px;background:#fff;border-top:1px solid #d6d6d6;border-bottom:1px solid #d6d6d6;box-sizing:border-box;"></div>
<div class="b" style="left:1066.2px;top:998px;width:7.2px;height:1.6px;background:#fff;"></div>
<div class="b" style="left:1123.7px;top:998px;width:7.2px;height:1.6px;background:#fff;"></div>
<div class="b" style="left:1126.5px;top:995.2px;width:1.6px;height:7.2px;background:#fff;"></div>
<span id="t100" class="t " style="left:1098.60px;transform:translateX(-50%);top:994.42px;font-size:12.5px;font-weight:400;color:#2b2b2b;">1</span>
<span id="t101" class="t " style="right:90.13px;top:994.04px;font-size:12px;font-weight:700;color:#262626;letter-spacing:0.196px;">8 290,00 <span class="rub">Р</span></span>
<svg class="b" style="left:1283px;top:990.3px" width="18" height="18" viewBox="0 0 18 18"><circle cx="9" cy="9" r="8.9" fill="#b2b2b2"/><path d="M5.9 5.9 L12.1 12.1 M12.1 5.9 L5.9 12.1" stroke="#fff" stroke-width="2.7" stroke-linecap="round"/></svg>
<div class="b" style="left:1267.5px;top:672px;width:1px;height:352.6px;background:rgba(0,0,0,0.085);"></div>
<div class="b" style="left:23.9px;top:1046.7px;width:1291.2px;height:130px;background:#fff;border-radius:8px;box-shadow:0 1px 3px rgba(0,0,0,0.04);"></div>
<span id="t102" class="t " style="left:50.74px;top:1094.05px;font-size:20.5px;font-weight:700;color:#262626;letter-spacing:-0.470px;">Итого по заказу</span>
<span id="t103" class="t " style="left:902.49px;top:1071.62px;font-size:12.5px;font-weight:400;color:#555;letter-spacing:-0.174px;">Позиций</span>
<span id="t104" class="t " style="left:902.62px;top:1101.22px;font-size:12.5px;font-weight:400;color:#555;letter-spacing:-1.218px;">Вес</span>
<span id="t105" class="t " style="left:902.62px;top:1129.42px;font-size:12.5px;font-weight:400;color:#555;letter-spacing:-0.836px;">Объём</span>
<span id="t106" class="t " style="right:312.59px;top:1069.75px;font-size:14px;font-weight:700;color:#262626;">7</span>
<span id="t107" class="t " style="right:312.43px;top:1099.05px;font-size:14px;font-weight:700;color:#262626;letter-spacing:0.330px;">0.48 кг</span>
<span id="t108" class="t " style="right:312.34px;top:1127.15px;font-size:14px;font-weight:700;color:#262626;letter-spacing:0.314px;">558.369 м³</span>
<div class="b" style="left:1054px;top:1077px;width:1px;height:56px;background:#e0e0e0;"></div>
<span id="t109" class="t " style="left:1075.75px;top:1080.42px;font-size:12.5px;font-weight:400;color:#555;letter-spacing:-0.536px;">Сумма заказа</span>
<span id="t110" class="t " style="right:56.97px;top:1078.58px;font-size:22px;font-weight:700;color:#262626;letter-spacing:-0.372px;">51 001,25 <span class="rub">Р</span></span>
<span id="t111" class="t " style="left:1075.87px;top:1119.62px;font-size:12.5px;font-weight:400;color:#555;letter-spacing:-0.354px;">С учётом скидки</span>
<span id="t112" class="t " style="right:58.38px;top:1118.60px;font-size:13px;font-weight:400;color:#555;letter-spacing:-0.692px;">0,00 <span class="rub">Р</span></span>
<div class="b" style="left:0px;top:0px;width:1344px;height:1px;background:#f7f7f7;"></div>
<svg class="b" style="left:0;top:0" width="1344" height="1149" viewBox="0 0 1344 1149" shape-rendering="crispEdges"><path d="M0 0 H7.6 L0 7.6 Z M1344 0 V7.6 L1336.4 0 Z M0 1149 V1141.4 L7.6 1149 Z M1344 1149 H1336.4 L1344 1141.4 Z" fill="#000"/></svg>
</div></body></html>
